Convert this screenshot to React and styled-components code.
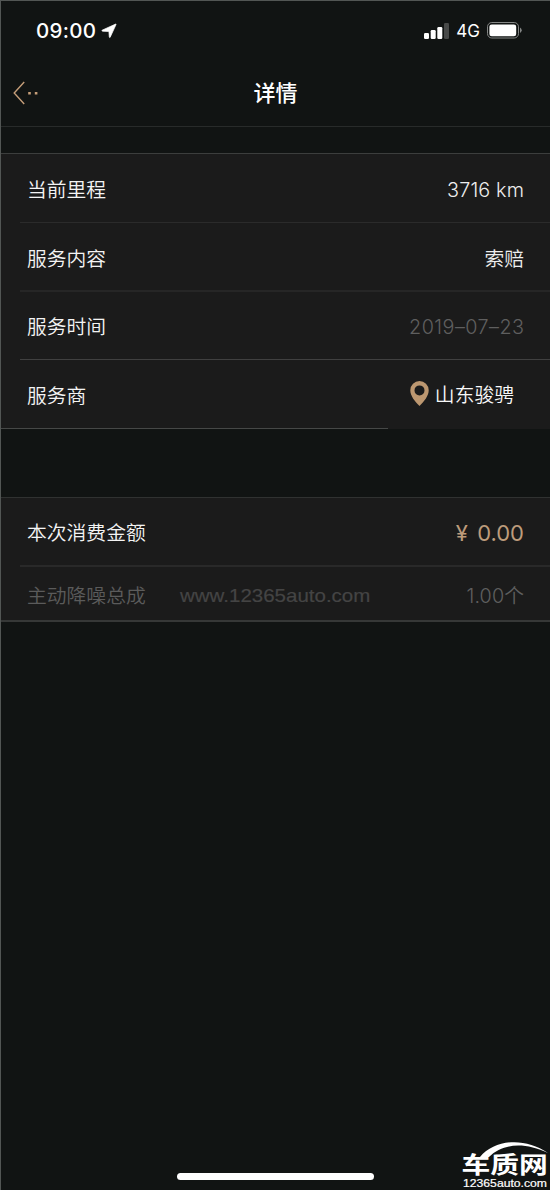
import React from "react";
import styled, { createGlobalStyle } from "styled-components";

const GlobalStyle = createGlobalStyle`
  * { box-sizing: border-box; }
  body {
    margin: 0;
    background: #111413;
    color: #f4f4f4;
    font-family: Inter, "Noto Sans CJK SC", sans-serif;
  }
`;

const Screen = styled.div`
  position: relative;
  width: 550px;
  height: 1190px;
  overflow: hidden;
  display: flex;
  flex-direction: column;
  background: #111413;
  border-top: 1px solid #525654;
  border-left: 1px solid #525654;
`;

const StatusBar = styled.div`
  height: 59px;
  padding: 0 28px 0 35px;
  display: flex;
  align-items: center;
  justify-content: space-between;
  flex: none;
`;

const StatusGroup = styled.div`
  display: flex;
  align-items: center;
  gap: ${(p) => p.$gap}px;
`;

const Clock = styled.span`
  font-size: 20.5px;
  line-height: 24px;
  font-weight: 550;
  letter-spacing: 0.3px;
  color: #fff;
`;

const Network = styled.span`
  font-size: 17px;
  line-height: 24px;
  font-weight: 400;
  color: #fff;
  padding-top: 1px;
`;

const NavBar = styled.header`
  height: 67px;
  padding: 0 12px 1px;
  display: grid;
  grid-template-columns: 1fr auto 1fr;
  align-items: center;
  border-bottom: 1px solid #282b2a;
  flex: none;
`;

const Title = styled.h1`
  margin: 0;
  font-size: 22px;
  line-height: 32px;
  font-weight: 500;
  color: #fff;
`;

const Card = styled.section`
  margin-top: ${(p) => p.$top}px;
  background: #1b1b1b;
  border-top: 1px solid ${(p) => p.$line || "#3c3e3d"};
  display: flex;
  flex-direction: column;
  flex: none;
`;

const Row = styled.div`
  height: ${(p) => p.$height || 69}px;
  margin-left: 19px;
  padding: ${(p) => p.$drop ?? 3}px 26px 0 7px;
  display: flex;
  align-items: center;
  justify-content: space-between;
  border-bottom: ${(p) => (p.$line ? `${p.$thick || 1}px solid ${p.$line}` : "none")};
`;

const CardEnd = styled.div`
  height: ${(p) => p.$height}px;
  width: ${(p) => p.$width};
  background: ${(p) => p.$color};
`;

const Label = styled.span`
  font-size: 19.8px;
  line-height: 30px;
  color: ${(p) => (p.$dim ? "#5b5b5b" : "#f4f4f4")};
  font-weight: 350;
`;

const Value = styled.span`
  font-size: ${(p) => p.$size || 19.8}px;
  line-height: 30px;
  font-weight: ${(p) => p.$weight || 350};
  letter-spacing: ${(p) => p.$spacing || 0}px;
  margin-right: ${(p) => -(p.$spacing || 0)}px;
  word-spacing: ${(p) => p.$wordGap || 0}px;
  color: ${(p) => p.$color || "#eeeeee"};
  white-space: pre;
`;

const Dealer = styled.div`
  display: flex;
  align-items: center;
  gap: 6px;
  padding: 0 10px 4px 0;

  ${Value} {
    padding-top: 2px;
  }
`;

const Watermark = styled.span`
  flex: none;
  width: 190px;
  margin-left: 34px;
  margin-right: auto;
  color: #444444;
  font: 400 18.4px/24px "Liberation Sans", Arial, sans-serif;
  -webkit-text-stroke: 0.2px #444444;
  white-space: nowrap;

  span {
    display: inline-block;
    transform: scaleX(1.115);
    transform-origin: left center;
  }
`;

const HomeIndicator = styled.div`
  position: absolute;
  left: 176px;
  bottom: 10px;
  width: 197px;
  height: 7px;
  border-radius: 4px;
  background: #fff;
`;

const SiteLogo = styled.svg`
  position: absolute;
  right: 0;
  bottom: 0;
  width: 90px;
  height: 50px;
`;

const LocationArrow = () => (
  <svg width="16" height="16" viewBox="0 0 16 16">
    <path d="M1.1 7.2 14.6 1.1Q15.3.8 15 1.6L9.2 14.2Q8.6 15 8.3 13.9L7.9 8.5 1.7 8.2Q.3 7.9 1.1 7.2Z" fill="#fff" stroke="#fff" strokeWidth="0.7" strokeLinejoin="round" />
  </svg>
);

const Signal = () => (
  <svg width="25" height="16" viewBox="0 0 25 16">
    <rect x="0" y="10" width="5" height="6" rx="1.2" fill="#fff" />
    <rect x="6.7" y="7" width="5" height="9" rx="1.2" fill="#fff" />
    <rect x="13.3" y="4" width="5" height="12" rx="1.2" fill="#fff" />
    <rect x="20" y="0" width="5" height="16" rx="1.2" fill="#484a49" />
  </svg>
);

const Battery = () => (
  <svg width="35" height="17" viewBox="0 0 35 17">
    <rect x="0.5" y="0.5" width="31" height="15.5" rx="4.3" fill="none" stroke="#858786" />
    <rect x="2.4" y="2.4" width="26.8" height="11.8" rx="2.3" fill="#fff" />
    <path d="M33 5.5Q34.7 6.5 34.7 8.3T33 11Z" fill="#858786" />
  </svg>
);

const BackIcon = () => (
  <svg width="27" height="24" viewBox="0 0 27 24">
    <path d="M11.2 1 1.2 12 11.2 23" fill="none" stroke="#c59e79" strokeWidth="1.4" />
    <path d="M15.2 11h2.6v2.4h-2.6zM21.8 11h2.6v2.4h-2.6z" fill="#c59e79" />
  </svg>
);

const Pin = () => (
  <svg width="19" height="25" viewBox="0 0 19 25">
    <path
      fillRule="evenodd"
      d="M9.5 0A9.2 9.2 0 0 0 .3 9.2C.3 15 5 20.5 9.5 25 14 20.5 18.7 15 18.7 9.2A9.2 9.2 0 0 0 9.5 0Zm0 4.4a5 5 0 1 1 0 10 5 5 0 0 1 0-10Z"
      fill="#bc9770"
    />
  </svg>
);

export default function App() {
  return (
    <>
      <GlobalStyle />
      <Screen>
        <StatusBar>
          <StatusGroup $gap={5}>
            <Clock>09:00</Clock>
            <LocationArrow />
          </StatusGroup>
          <StatusGroup $gap={7}>
            <Signal />
            <Network>4G</Network>
            <Battery />
          </StatusGroup>
        </StatusBar>
        <NavBar>
          <BackIcon />
          <Title>详情</Title>
        </NavBar>

        <Card $top={26}>
          <Row $line="#2b2b2b"><Label>当前里程</Label><Value $spacing={0.15}>3716 km</Value></Row>
          <Row $line="#262626" $thick={2} $drop={4}><Label>服务内容</Label><Value>索赔</Value></Row>
          <Row $height={68} $line="#404040" $drop={3}><Label>服务时间</Label><Value $spacing={0.45} $color="#5f5f5f">2019–07–23</Value></Row>
          <Row $height={68}>
            <Label>服务商</Label>
            <Dealer><Pin /><Value $color="#f8f8f8">山东骏骋</Value></Dealer>
          </Row>
          <CardEnd $height={1} $width="387px" $color="#464847" />
        </Card>

        <Card $top={68} $line="#303231">
          <Row $line="#292929" $thick={2}><Label>本次消费金额</Label><Value $size={22} $weight={400} $wordGap={3} $color="#bd9c7b">¥ 0.00</Value></Row>
          <Row $height={53} $drop={4}>
            <Label $dim>主动降噪总成</Label>
            <Watermark><span>www.12365auto.com</span></Watermark>
            <Value $spacing={0.1} $color="#5f5f5f">1.00个</Value>
          </Row>
          <CardEnd $height={2} $width="100%" $color="#363837" />
        </Card>

        <HomeIndicator />
        <SiteLogo viewBox="0 0 90 50">
          <path d="M20 17C35-1 65-3 88 13C65 2 43 3 29 17Z" fill="#fff" />
          <text transform="translate(1.5 33) scale(1.25 1)" fill="#fff" fontSize="23" fontWeight="700" fontFamily="Noto Sans CJK SC, sans-serif" textLength="69" lengthAdjust="spacingAndGlyphs">车质网</text>
          <text x="3" y="46.5" fill="#fff" stroke="#fff" strokeWidth="0.2" fontSize="11" fontFamily="Liberation Sans, Arial, sans-serif" textLength="84" lengthAdjust="spacingAndGlyphs">12365auto.com</text>
        </SiteLogo>
      </Screen>
    </>
  );
}
